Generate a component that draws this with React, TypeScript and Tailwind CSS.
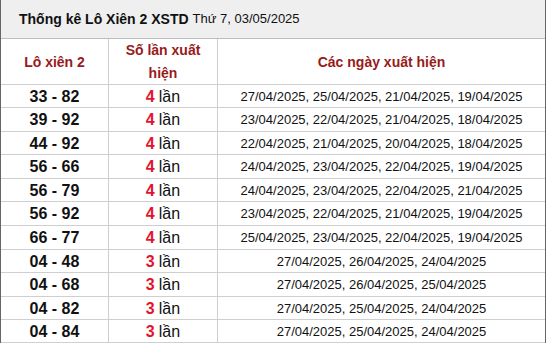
const rows = [
  { pair: "33 - 82", count: 4, dates: "27/04/2025, 25/04/2025, 21/04/2025, 19/04/2025", h: "h-[23px]" },
  { pair: "39 - 92", count: 4, dates: "23/04/2025, 22/04/2025, 21/04/2025, 18/04/2025", h: "h-[24px]" },
  { pair: "44 - 92", count: 4, dates: "22/04/2025, 21/04/2025, 20/04/2025, 18/04/2025", h: "h-[23px]" },
  { pair: "56 - 66", count: 4, dates: "24/04/2025, 23/04/2025, 22/04/2025, 19/04/2025", h: "h-[24px]" },
  { pair: "56 - 79", count: 4, dates: "24/04/2025, 23/04/2025, 22/04/2025, 21/04/2025", h: "h-[23px]" },
  { pair: "56 - 92", count: 4, dates: "23/04/2025, 22/04/2025, 21/04/2025, 19/04/2025", h: "h-[24px]" },
  { pair: "66 - 77", count: 4, dates: "25/04/2025, 23/04/2025, 22/04/2025, 19/04/2025", h: "h-[24px]" },
  { pair: "04 - 48", count: 3, dates: "27/04/2025, 26/04/2025, 24/04/2025", h: "h-[23px]" },
  { pair: "04 - 68", count: 3, dates: "27/04/2025, 26/04/2025, 25/04/2025", h: "h-[24px]" },
  { pair: "04 - 82", count: 3, dates: "27/04/2025, 25/04/2025, 24/04/2025", h: "h-[23px]" },
  { pair: "04 - 84", count: 3, dates: "27/04/2025, 25/04/2025, 24/04/2025", h: "h-[23px]" },
];

export default function App() {
  return (
    <div className="w-[546px] h-[343px] bg-white border-l border-r border-[#666] font-['Liberation_Sans',Arial,sans-serif] text-[#111] overflow-hidden">
      {/* Title */}
      <div className="h-[39px] bg-[#efefef] border-b border-[#bdbdbd] flex items-center pl-[18px]">
        <span className="font-bold text-[14px]">Thống kê Lô Xiên 2 XSTD</span>
        <span className="ml-[4px] text-[13px]">Thứ 7, 03/05/2025</span>
      </div>

      {/* Header */}
      <div className="grid grid-cols-[108px_109px_1fr] h-[46px] border-b border-[#cfcfcf] text-[14px] font-bold text-[#971b1b] leading-[23px]">
        <div className="flex items-center justify-center border-r border-[#cfcfcf]">Lô xiên 2</div>
        <div className="flex items-center justify-center text-center border-r border-[#cfcfcf] px-[14px]">
          Số lần xuất hiện
        </div>
        <div className="flex items-center justify-center">Các ngày xuất hiện</div>
      </div>

      {/* Rows */}
      {rows.map((r) => (
        <div key={r.pair} className={`grid grid-cols-[108px_109px_1fr] ${r.h} border-b border-[#cfcfcf]`}>
          <div className="flex items-center justify-center border-r border-[#cfcfcf] text-[16px] font-bold">
            {r.pair}
          </div>
          <div className="flex items-center justify-center border-r border-[#cfcfcf] text-[16px]">
            <span className="font-bold text-[#e3132f] mr-[4px]">{r.count}</span>
            <span>lần</span>
          </div>
          <div className="flex items-center justify-center text-[13px]">{r.dates}</div>
        </div>
      ))}
    </div>
  );
}
